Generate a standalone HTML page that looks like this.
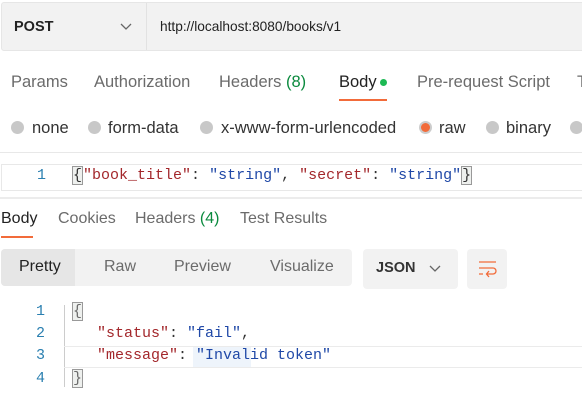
<!DOCTYPE html>
<html><head><style>
*{margin:0;padding:0;box-sizing:border-box}
body{width:582px;height:409px;background:#fff;position:relative;overflow:hidden;font-family:"Liberation Sans",sans-serif;color:#6b6b6b}
.a{position:absolute;white-space:nowrap}
.t{font-size:16px;line-height:18px}
.u{font-size:16.5px;line-height:18px}
.m{font-family:"Liberation Mono",monospace;font-size:15px;line-height:18px}
.r{position:absolute;width:13px;height:13px;border-radius:50%;background:#c8c8c8}
.k{color:#a3272b}.s{color:#1f48a7}.n{color:#2a7fb0}
.b{border:1px solid #999;background:#eef0ee}
</style></head><body>
<div class="a" style="left:1px;top:2px;width:590px;height:49px;background:#f2f2f2;border:1px solid #e6e6e6;border-radius:3px"></div>
<div class="a" style="left:146px;top:3px;width:1px;height:47px;background:#e2e2e2"></div>
<div class="a" style="left:14px;top:19px;font-size:14.5px;font-weight:bold;color:#222">POST</div>
<svg class="a" style="left:120px;top:23px" width="12" height="8"><path d="M1 1L6 6L11 1" stroke="#666" stroke-width="1.3" fill="none"/></svg>
<div class="a" style="left:160px;top:18px;font-size:13.7px;line-height:18px;color:#222">http://localhost:8080/books/v1</div>

<div class="a u" style="left:11px;top:73px">Params</div>
<div class="a u" style="left:94px;top:73px">Authorization</div>
<div class="a u" style="left:219px;top:73px">Headers <span style="color:#0b8a3e">(8)</span></div>
<div class="a u" style="left:339px;top:73px;color:#222">Body</div>
<div class="a" style="left:380px;top:79px;width:7px;height:7px;border-radius:50%;background:#1db954"></div>
<div class="a" style="left:339px;top:99px;width:48px;height:2px;background:#f26b3a"></div>
<div class="a u" style="left:417px;top:73px">Pre-request Script</div>
<div class="a u" style="left:577px;top:73px">T</div>

<div class="r" style="left:11px;top:121px"></div><div class="a u" style="left:32px;top:119px;color:#333">none</div>
<div class="r" style="left:88px;top:121px"></div><div class="a u" style="left:108px;top:119px;color:#333">form-data</div>
<div class="r" style="left:200px;top:121px"></div><div class="a u" style="left:221px;top:119px;color:#333">x-www-form-urlencoded</div>
<div class="r" style="left:419px;top:121px;background:#f26b3a;border:2px solid #ccc"></div><div class="a u" style="left:439px;top:119px;color:#333">raw</div>
<div class="r" style="left:486px;top:121px"></div><div class="a u" style="left:506px;top:119px;color:#333">binary</div>
<div class="r" style="left:570px;top:121px"></div>

<div class="a" style="left:0;top:152px;width:582px;height:1px;background:#e8e8e8"></div>
<div class="a" style="left:1px;top:164px;width:590px;height:27px;border:1px solid #e8e8e8"></div>
<div class="a m n" style="left:37px;top:167px">1</div>
<div class="a m" style="left:72px;top:167px;color:#333"><span class="b">{</span><span class="k">"book_title"</span>: <span class="s">"string"</span>, <span class="k">"secret"</span>: <span class="s">"string"</span><span class="b">}</span></div>
<div class="a" style="left:0;top:197px;width:582px;height:2px;background:#ececec"></div>

<div class="a t" style="left:1px;top:210px;color:#222">Body</div>
<div class="a t" style="left:58px;top:210px">Cookies</div>
<div class="a t" style="left:135px;top:210px">Headers <span style="color:#0b8a3e">(4)</span></div>
<div class="a t" style="left:240px;top:210px">Test Results</div>
<div class="a" style="left:1px;top:236px;width:32px;height:2px;background:#f26b3a"></div>

<div class="a" style="left:1px;top:249px;width:351px;height:37px;background:#f2f2f2;border-radius:4px"></div>
<div class="a" style="left:1px;top:249px;width:74px;height:37px;background:#e6e6e6;border-radius:4px 0 0 4px"></div>
<div class="a t" style="left:19px;top:258px;color:#222">Pretty</div>
<div class="a t" style="left:104px;top:258px">Raw</div>
<div class="a t" style="left:174px;top:258px">Preview</div>
<div class="a t" style="left:270px;top:258px">Visualize</div>
<div class="a" style="left:363px;top:249px;width:95px;height:40px;background:#f2f2f2;border-radius:4px"></div>
<div class="a" style="left:376px;top:260px;font-size:14.5px;font-weight:bold;color:#333">JSON</div>
<svg class="a" style="left:429px;top:265px" width="12" height="8"><path d="M1 1L6 6L11 1" stroke="#666" stroke-width="1.3" fill="none"/></svg>
<div class="a" style="left:467px;top:249px;width:40px;height:40px;background:#f2f2f2;border-radius:4px"></div>
<svg class="a" style="left:477px;top:259px" width="22" height="20"><path d="M2 3H19M2 9H16a3 3 0 0 1 0 6H10M12 12L9.5 15L12 18M2 15H6" stroke="#f26b3a" stroke-width="1.3" fill="none"/></svg>

<div class="a" style="left:64px;top:305px;width:1px;height:82px;background:#ccc"></div>
<div class="a" style="left:64px;top:346px;width:518px;height:22px;border-top:1px solid #ebebeb;border-bottom:1px solid #ebebeb"></div>
<div class="a" style="left:193px;top:347px;width:58px;height:20px;background:#eef4fb"></div>
<div class="a m n" style="left:36px;top:303px">1</div>
<div class="a m n" style="left:36px;top:325px">2</div>
<div class="a m n" style="left:36px;top:347px">3</div>
<div class="a m n" style="left:36px;top:370px">4</div>
<div class="a m" style="left:72px;top:303px"><span class="b">{</span></div>
<div class="a m" style="left:97px;top:325px;color:#333"><span class="k">"status"</span>: <span class="s">"fail"</span>,</div>
<div class="a m" style="left:97px;top:347px;color:#333"><span class="k">"message"</span>: <span class="s">"Invalid token"</span></div>
<div class="a m" style="left:72px;top:370px"><span class="b">}</span></div>
</body></html>
